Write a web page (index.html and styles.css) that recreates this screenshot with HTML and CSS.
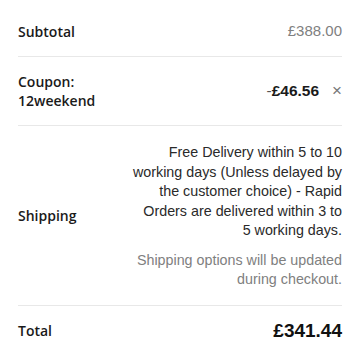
FILE: index.html
```html
<!DOCTYPE html>
<html>
<head>
<meta charset="utf-8">
<link rel="stylesheet" href="styles.css">
</head>
<body>
<div class="totals">
  <div class="row first">
    <div class="label">Subtotal</div>
    <div class="value muted">£388.00</div>
  </div>
  <div class="row">
    <div class="label">Coupon:<br>12weekend</div>
    <div class="value coupon"><span class="amount"><span class="minus">-</span>£46.56</span><span class="remove">×</span></div>
  </div>
  <div class="row">
    <div class="label">Shipping</div>
    <div class="value shipping">
      <div class="ship-text">Free Delivery within 5 to 10 working days (Unless delayed by the customer choice) - Rapid Orders are delivered within 3 to 5 working days.</div>
      <div class="ship-note">Shipping options will be updated during checkout.</div>
    </div>
  </div>
  <div class="row last">
    <div class="label">Total</div>
    <div class="value total">£341.44</div>
  </div>
</div>
</body>
</html>
```
FILE: styles.css
```css
html, body { margin: 0; padding: 0; background: #fff; }
.totals { padding: 6px 10px 0 18px; font-family: "Liberation Sans", Arial, sans-serif; }
.row { display: flex; justify-content: space-between; align-items: center; padding: 15px 0; border-bottom: 1px solid #e8e8e8; }
.row.last { border-bottom: none; }
.label { font-family: "Open Sans", sans-serif; font-weight: 600; font-size: 14px; line-height: 19px; color: #1a1a1a; }
.value { font-size: 14.3px; line-height: 20px; text-align: right; }
.muted { color: #808080; font-size: 15px; }
.coupon { display: flex; align-items: center; gap: 13px; }
.amount { font-weight: 700; color: #1a1a1a; font-size: 15.5px; }
.minus { font-weight: 400; color: #555; }
.remove { color: #777; font-size: 17px; }
.shipping { width: 210px; color: #2a2a2a; line-height: 19.5px; padding-top: 2px; }
.ship-note { margin-top: 10px; color: #808080; }
.total { font-weight: 700; font-size: 19px; color: #111; }
```
